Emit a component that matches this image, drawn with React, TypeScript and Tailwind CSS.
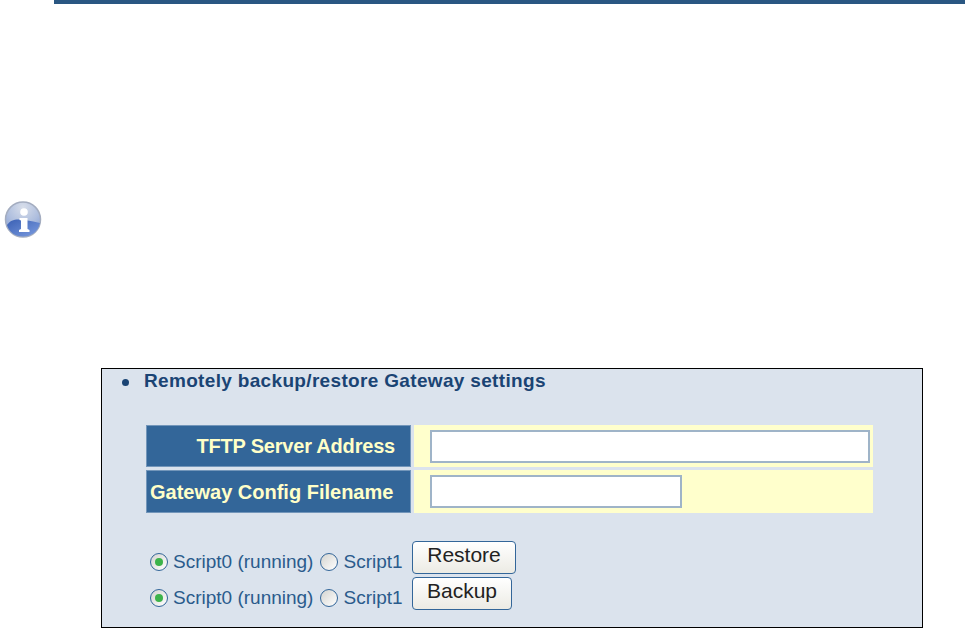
import React from 'react';

function InfoIcon() {
    return (
        <svg width="40" height="40" viewBox="0 0 40 40" className="block">
            <defs>
                <radialGradient id="ball" cx="50%" cy="15%" r="80%">
                    <stop offset="0%" stopColor="#d8deea" />
                    <stop offset="60%" stopColor="#aebede" />
                    <stop offset="100%" stopColor="#86a0d6" />
                </radialGradient>
                <linearGradient id="wave" x1="0" y1="0" x2="1" y2="1">
                    <stop offset="0%" stopColor="#3a60b4" />
                    <stop offset="100%" stopColor="#7c9ce0" />
                </linearGradient>
            </defs>
            <circle cx="21" cy="19.5" r="17.5" fill="url(#ball)" stroke="#a4adc0" strokeWidth="1.5" />
            <path d="M5 25 C10 18 17 18 38 23 C36 32 29 36.5 21 36.5 C13 36.5 7 32 5 25 Z" fill="url(#wave)" />
            <circle cx="22" cy="12" r="3.8" fill="#fff" />
            <path d="M17.5 18 L25.5 18 L25.5 29 L27.5 30 L27.5 32 L17 32 L17 30 L19 29 L19 20.5 L17.5 20 Z" fill="#fff" />
        </svg>
    );
}

function Radio({ checked }: { checked?: boolean }) {
    return (
        <span className="w-[18px] h-[18px] rounded-full border border-[#336699] bg-gradient-to-br from-[#d4d4d0] to-white flex items-center justify-center shrink-0">
            {checked && <span className="w-[8px] h-[8px] rounded-full bg-[#3cb34a]" />}
        </span>
    );
}

function ScriptRow({ label, width, offset }: { label: string; width: string; offset: string }) {
    return (
        <div className="flex items-center h-[33px]">
            <div className={`flex items-center text-[19px] text-[#2a5b8c] w-[262px] ${offset}`}>
                <Radio checked />
                <span className="ml-[5px]">Script0 (running)</span>
                <span className="ml-[7px]"><Radio /></span>
                <span className="ml-[5px]">Script1</span>
            </div>
            <button className={`${width} h-[33px] border border-[#336699] rounded-[4px] bg-gradient-to-b from-white to-[#ecebe4] text-[21px] leading-[24px] pb-[5px] text-[#222]`}>
                {label}
            </button>
        </div>
    );
}

export default function App() {
    return (
        <div className="w-[965px] h-[628px] overflow-hidden bg-white font-['Liberation_Sans',Arial,sans-serif]">
            <div className="h-[4px] ml-[54px] bg-[#2a5782]" />

            <div className="mt-[196px] ml-[2px] h-[40px]">
                <InfoIcon />
            </div>

            <div className="mt-[128px] ml-[101px] w-[822px] h-[260px] border border-black bg-[#dbe3ed] pl-[44px]">
                <div className="flex items-center h-[24px] -ml-[24px] text-[19px] font-bold text-[#1a4474]">
                    <span className="w-[7px] h-[7px] rounded-full bg-[#1a4474] mr-[15px] mt-[3px]" />
                    <span className="tracking-[0.33px]">Remotely backup/restore Gateway settings</span>
                </div>

                <div className="mt-[32px] w-[727px] grid grid-cols-[265px_459px] gap-x-[3px] gap-y-[3px]">
                    <div className="h-[42px] bg-[#336699] border border-[#7396ba] text-[#ffffc8] font-bold text-[20px] tracking-[-0.2px] flex items-center justify-end pr-[15px]">
                        TFTP Server Address
                    </div>
                    <div className="h-[42px] bg-[#ffffcc] flex items-center pl-[16px]">
                        <input className="w-[440px] h-[33px] bg-white border-2 border-[#9fb4c8] outline-none" />
                    </div>
                    <div className="h-[43px] bg-[#336699] border border-[#7396ba] text-[#ffffc8] font-bold text-[20px] flex items-center pl-[3px]">
                        Gateway Config Filename
                    </div>
                    <div className="h-[43px] bg-[#ffffcc] flex items-center pl-[16px]">
                        <input className="w-[252px] h-[33px] bg-white border-2 border-[#9fb4c8] outline-none" />
                    </div>
                </div>

                <div className="mt-[28px] ml-[4px] flex flex-col gap-[3px]">
                    <ScriptRow label="Restore" width="w-[104px]" offset="pt-[9px]" />
                    <ScriptRow label="Backup" width="w-[100px]" offset="pt-[9px]" />
                </div>
            </div>
        </div>
    );
}
